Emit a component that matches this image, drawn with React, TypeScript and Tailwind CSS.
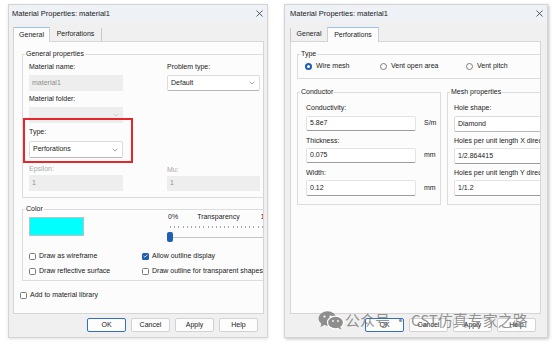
import React from "react";

const ui = "font-['Liberation_Sans',Arial,sans-serif]";

function Chevron({ dim }: { dim?: boolean }) {
  return (
    <svg width="6" height="4" viewBox="0 0 6 4" className="shrink-0">
      <path
        d="M0.6 0.8 L3 3.1 L5.4 0.8"
        fill="none"
        stroke={dim ? "#c8c8c8" : "#8a8a8a"}
        strokeWidth="0.8"
      />
    </svg>
  );
}

function CloseX() {
  return (
    <svg width="7" height="7" viewBox="0 0 7 7">
      <path d="M0.5 0.5 L6.5 6.5 M6.5 0.5 L0.5 6.5" stroke="#333" strokeWidth="0.8" />
    </svg>
  );
}

function Label({
  children,
  dim,
  className = "",
}: {
  children: React.ReactNode;
  dim?: boolean;
  className?: string;
}) {
  return (
    <div
      className={`h-[10px] whitespace-nowrap text-[7px] leading-[10px] ${
        dim ? "text-[#a8a8a8]" : "text-[#222]"
      } ${className}`}
    >
      {children}
    </div>
  );
}

function Disabled({ value, combo, className = "" }: { value?: string; combo?: boolean; className?: string }) {
  return (
    <div
      className={`flex items-center justify-between bg-[#eeeeee] pl-[3px] pr-[4px] text-[7px] text-[#909090] ${className}`}
    >
      <span>{value}</span>
      {combo && <Chevron dim />}
    </div>
  );
}

function Combo({ value, className = "" }: { value: string; className?: string }) {
  return (
    <div
      className={`flex items-center justify-between rounded-[2px] border border-[#dcdcdc] border-b-[#b8b8b8] bg-white pl-[3px] pr-[4px] text-[7px] text-[#222] ${className}`}
    >
      <span>{value}</span>
      <Chevron />
    </div>
  );
}

function Edit({ value, className = "" }: { value: string; className?: string }) {
  return (
    <div
      className={`flex shrink-0 items-center rounded-[2px] border border-[#e3e3e3] border-b-[#9c9c9c] bg-white pl-[3px] text-[7px] text-[#222] ${className}`}
    >
      {value}
    </div>
  );
}

function Check({ on, label }: { on?: boolean; label: string }) {
  return (
    <div className="flex h-[10px] items-center gap-[3px] whitespace-nowrap text-[7px] text-[#222]">
      {on ? (
        <span className="flex h-[7px] w-[7px] items-center justify-center rounded-[1.5px] bg-[#1f5fb4]">
          <svg width="5" height="4" viewBox="0 0 5 4">
            <path d="M0.6 2 L1.9 3.2 L4.4 0.7" fill="none" stroke="white" strokeWidth="0.8" />
          </svg>
        </span>
      ) : (
        <span className="h-[7px] w-[7px] rounded-[1.5px] border border-[#7a7a7a] bg-white" />
      )}
      <span>{label}</span>
    </div>
  );
}

function Radio({ on, label, className = "" }: { on?: boolean; label: string; className?: string }) {
  return (
    <div className={`flex h-[10px] items-center gap-[4px] whitespace-nowrap text-[7px] text-[#222] ${className}`}>
      {on ? (
        <span className="flex h-[7px] w-[7px] items-center justify-center rounded-full bg-[#1d5db3]">
          <span className="h-[3px] w-[3px] rounded-full bg-white" />
        </span>
      ) : (
        <span className="h-[7px] w-[7px] rounded-full border border-[#7d7d7d] bg-white" />
      )}
      <span>{label}</span>
    </div>
  );
}

function Button({ children, primary }: { children: React.ReactNode; primary?: boolean }) {
  return (
    <div
      className={`flex h-[14px] w-[39px] items-center justify-center rounded-[2px] border bg-[#fdfdfd] text-[7px] text-[#222] ${
        primary ? "border-[#2f6fc4]" : "border-[#d2d2d2]"
      }`}
    >
      {children}
    </div>
  );
}

function TitleBar({ className = "" }: { className?: string }) {
  return (
    <div className={`flex h-[17px] shrink-0 items-center justify-between bg-[#eef1f6] text-[7.5px] text-[#1a1a1a] ${className}`}>
      <span>Material Properties: material1</span>
      <CloseX />
    </div>
  );
}

function Buttons({ className = "" }: { className?: string }) {
  return (
    <div className={`flex justify-end gap-[5px] pt-[4px] ${className}`}>
      <Button primary>OK</Button>
      <Button>Cancel</Button>
      <Button>Apply</Button>
      <Button>Help</Button>
    </div>
  );
}

function Legend({ children }: { children: React.ReactNode }) {
  return <legend className="ml-[2px] px-[1px] text-[7px] leading-[8px] text-[#222]">{children}</legend>;
}

function LeftDialog() {
  const ticks = Array.from({ length: 24 });
  return (
    <div className="ml-[8px] flex h-[334px] w-[260px] shrink-0 flex-col border border-[#d4d4d4] bg-[#f0f0f0] shadow-[0_1px_3px_rgba(0,0,0,0.12)]">
      <TitleBar className="pl-[3px] pr-[4px]" />
      <div className="flex h-[19px] items-end pl-[4px]">
        <div className="relative z-10 -mb-px flex h-[15px] w-[37px] items-center justify-center border border-b-0 border-[#d0d0d0] border-t-[#9cc0ea] bg-[#fcfcfc] text-[7px] text-[#222]">
          General
        </div>
        <div className="flex h-[13px] w-[52px] items-center justify-center border-r border-[#c8c8c8] text-[7px] text-[#222]">
          Perforations
        </div>
      </div>
      <div className="ml-[4px] h-[273px] w-[251px] overflow-hidden border border-[#d6d6d6] bg-[#fcfcfc]">
        <fieldset className="ml-[8px] mt-[8px] w-[246px] border border-[#dcdcdc] p-0 pb-[6px]">
          <Legend>General properties</Legend>
          <div className="flex pl-[6px]">
            <div className="flex w-[94px] flex-col">
              <Label className="mt-[4px]">Material name:</Label>
              <Disabled value="material1" className="mt-[3px] h-[16px]" />
              <Label className="mt-[3px]">Material folder:</Label>
              <Disabled combo className="mt-[3px] h-[16px]" />
              <div className="relative mt-[4px]">
                <Label>Type:</Label>
                <Combo value="Perforations" className="mt-[4px] h-[17px]" />
                <div className="absolute left-[-6px] top-[-9px] h-[45px] w-[110px] border-2 border-[#e5262b]" />
              </div>
              <Label dim className="mt-[6px]">
                Epsilon:
              </Label>
              <Disabled value="1" className="mt-[1px] h-[16px]" />
            </div>
            <div className="ml-[44px] flex w-[93px] flex-col justify-between">
              <div>
                <Label className="mt-[4px]">Problem type:</Label>
                <Combo value="Default" className="mt-[3px] h-[16px]" />
              </div>
              <div>
                <Label dim>Mu:</Label>
                <Disabled value="1" className="mt-[1px] h-[15px]" />
              </div>
            </div>
          </div>
        </fieldset>

        <fieldset className="ml-[8px] mt-[7px] w-[246px] border border-[#dcdcdc] p-0 pb-[4px]">
          <Legend>Color</Legend>
          <div className="flex pl-[6px]">
            <div className="mt-[4px] h-[19px] w-[55px] border border-[#c0c0c0] bg-[#00ffff]" />
            <div className="ml-[83px] mt-[-1px] flex w-[100px] flex-col">
              <div className="flex h-[10px] items-center whitespace-nowrap text-[7px] text-[#222]">
                <span className="ml-[1px]">0%</span>
                <span className="ml-[19px]">Transparency</span>
                <span className="ml-[21px]">100%</span>
              </div>
              <div className="mt-[4px] ml-[3px] flex h-[2px] justify-between">
                {ticks.map((_, i) => (
                  <span key={i} className="h-[2px] w-px bg-[#a8a8a8]" />
                ))}
              </div>
              <div className="mt-[4px] flex h-[10px] items-center">
                <span className="h-[10px] w-[6px] rounded-[2px] bg-[#1f5fb4]" />
                <span className="h-px flex-1 bg-[#c4c4c4]" />
              </div>
            </div>
          </div>
          <div className="mt-[9px] flex pl-[6px]">
            <div className="w-[113px]">
              <Check label="Draw as wireframe" />
            </div>
            <Check on label="Allow outline display" />
          </div>
          <div className="mt-[5px] flex pl-[6px]">
            <div className="w-[113px]">
              <Check label="Draw reflective surface" />
            </div>
            <Check label="Draw outline for transparent shapes" />
          </div>
        </fieldset>

        <div className="ml-[6px] mt-[9px]">
          <Check label="Add to material library" />
        </div>
      </div>
      <Buttons className="pr-[9px]" />
    </div>
  );
}

function RightDialog() {
  return (
    <div className="ml-[16px] flex h-[334px] w-[264px] shrink-0 flex-col border border-[#d4d4d4] bg-[#f0f0f0] shadow-[1px_1px_3px_rgba(0,0,0,0.25)]">
      <TitleBar className="pl-[5px] pr-[4px]" />
      <div className="flex h-[19px] items-end pl-[5px]">
        <div className="flex h-[13px] w-[37px] items-center justify-center border-l border-[#c8c8c8] text-[7px] text-[#222]">
          General
        </div>
        <div className="relative z-10 -mb-px flex h-[15px] w-[52px] items-center justify-center border border-b-0 border-[#d0d0d0] border-t-[#9cc0ea] bg-[#fcfcfc] text-[7px] text-[#222]">
          Perforations
        </div>
      </div>
      <div className="ml-[5px] h-[273px] w-[251px] overflow-hidden border border-[#d6d6d6] bg-[#fcfcfc]">
        <fieldset className="ml-[6px] mt-[8px] w-[250px] border border-[#dcdcdc] p-0 pb-[7px]">
          <Legend>Type</Legend>
          <div className="mt-[3px] flex pl-[7px]">
            <Radio on label="Wire mesh" className="w-[75px]" />
            <Radio label="Vent open area" className="w-[86px]" />
            <Radio label="Vent pitch" />
          </div>
        </fieldset>
        <div className="mt-[9px] flex items-start">
          <fieldset className="ml-[6px] w-[144px] shrink-0 border border-[#dcdcdc] p-0 pb-[8px]">
            <Legend>Conductor</Legend>
            <div className="pl-[8px]">
              <Label className="mt-[7px]">Conductivity:</Label>
              <div className="mt-[3px] flex items-center text-[7px] text-[#222]">
                <Edit value="5.8e7" className="h-[15px] w-[110px]" />
                <span className="ml-[8px]">S/m</span>
              </div>
              <Label className="mt-[5px]">Thickness:</Label>
              <div className="mt-[2px] flex items-center text-[7px] text-[#222]">
                <Edit value="0.075" className="h-[15px] w-[110px]" />
                <span className="ml-[8px]">mm</span>
              </div>
              <Label className="mt-[5px]">Width:</Label>
              <div className="mt-[2px] flex items-center text-[7px] text-[#222]">
                <Edit value="0.12" className="h-[16px] w-[110px]" />
                <span className="ml-[8px]">mm</span>
              </div>
            </div>
          </fieldset>
          <fieldset className="ml-[6px] w-[110px] shrink-0 border border-[#dcdcdc] p-0 pb-[8px]">
            <Legend>Mesh properties</Legend>
            <div className="pl-[6px]">
              <Label className="mt-[7px]">Hole shape:</Label>
              <Combo value="Diamond" className="mt-[3px] h-[16px] w-[110px]" />
              <Label className="mt-[4px]">Holes per unit length X direction:</Label>
              <Edit value="1/2.864415" className="mt-[2px] h-[16px] w-[110px]" />
              <Label className="mt-[4px]">Holes per unit length Y direction:</Label>
              <Edit value="1/1.2" className="mt-[2px] h-[16px] w-[110px]" />
            </div>
          </fieldset>
        </div>
      </div>
      <Buttons className="pr-[11px]" />
    </div>
  );
}

function WeChat() {
  return (
    <svg width="26" height="19" viewBox="0 0 26 19">
      <ellipse cx="9.5" cy="7.5" rx="9" ry="7.2" fill="#8e8e8e" />
      <path d="M3.5 12 L2.5 16 L7 13.5 Z" fill="#8e8e8e" />
      <ellipse cx="17.5" cy="11.5" rx="8" ry="6.3" fill="#8e8e8e" stroke="white" strokeWidth="1.2" />
      <path d="M22 15.5 L23.5 18.5 L19.5 16.8 Z" fill="#8e8e8e" />
      <circle cx="6.5" cy="5.5" r="1.1" fill="white" />
      <circle cx="12.5" cy="5.5" r="1.1" fill="white" />
      <circle cx="15" cy="10" r="0.9" fill="white" />
      <circle cx="20" cy="10" r="0.9" fill="white" />
    </svg>
  );
}

function Watermark() {
  return (
    <div className="pointer-events-none absolute left-[318px] top-[310px] flex items-center font-['Noto_Sans_CJK_SC',sans-serif] text-[15px] leading-[20px] text-[rgba(120,120,120,0.8)]">
      <WeChat />
      <span className="ml-[1px]">公众号</span>
      <span className="mx-[3px]">·</span>
      <span>CST仿真专家之路</span>
    </div>
  );
}

export default function App() {
  return (
    <div className={`relative flex h-[345px] w-[554px] items-start overflow-hidden bg-white pt-[4px] ${ui}`}>
      <LeftDialog />
      <RightDialog />
      <Watermark />
    </div>
  );
}
